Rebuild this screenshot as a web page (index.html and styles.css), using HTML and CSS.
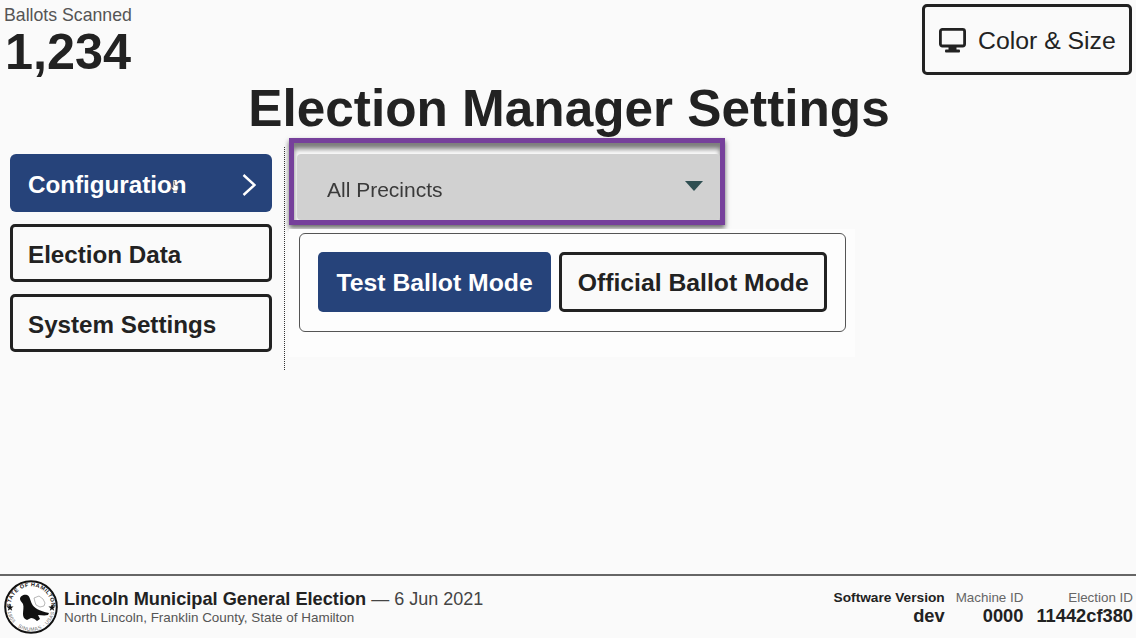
FILE: index.html
```html
<!DOCTYPE html>
<html lang="en">
<head>
<meta charset="utf-8">
<title>Election Manager Settings</title>
<link rel="stylesheet" href="styles.css">
</head>
<body>

<header class="top">
  <div class="tally">
    <div class="tally-label">Ballots Scanned</div>
    <div class="tally-count">1,234</div>
  </div>
  <button class="btn btn-size">
    <svg class="monitor" viewBox="0 0 27 25" width="27" height="25">
      <rect x="1.4" y="1.4" width="24.2" height="16.600" rx="2" fill="none" stroke="#222" stroke-width="2.800"/>
      <rect x="9.500" y="18" width="8" height="4" fill="#222"/>
      <rect x="6" y="21.500" width="15" height="3" rx="1" fill="#222"/>
    </svg>
    Color &amp; Size
  </button>
</header>

<h1 class="title">Election Manager Settings</h1>

<main class="main">
  <nav class="sidebar">
    <a class="btn nav-item nav-active">
      Configuration
      <svg class="chevron" viewBox="0 0 14 24" width="14" height="24">
        <path d="M1.500 2l11 10-11 10" fill="none" stroke="#fff" stroke-width="2.400"/>
      </svg>
      <svg class="cursor" viewBox="0 0 10 12" width="10" height="12">
        <path d="M3 1h1.600v4l3.600.8V9L7 11H3.600L1 7.400l1-.6 1 1z" fill="#fff" stroke="#555" stroke-width=".7"/>
      </svg>
    </a>
    <a class="btn nav-item">Election Data</a>
    <a class="btn nav-item">System Settings</a>
  </nav>

  <section class="content">
    <div class="highlight">
      <div class="select">
        <span class="select-text">All Precincts</span>
        <span class="select-arrow"></span>
      </div>
    </div>
    <div class="mode-wrap">
      <div class="mode-box">
        <button class="btn btn-mode btn-primary">Test Ballot Mode</button>
        <button class="btn btn-mode">Official Ballot Mode</button>
      </div>
    </div>
  </section>
</main>

<footer class="footer">
  <svg class="seal" viewBox="0 0 54 54" width="54" height="54">
    <defs>
      <path id="seal-top" d="M6.500 27a20.500 20.500 0 0 1 41 0"/>
      <path id="seal-bottom" d="M3 27a24 24 0 0 0 48 0"/>
    </defs>
    <circle cx="27" cy="27" r="25.800" fill="#fff" stroke="#111" stroke-width="2"/>
    <text class="seal-text seal-text-bold"><textPath href="#seal-top" startOffset="50%" text-anchor="middle">STATE OF HAMILTON</textPath></text>
    <text class="seal-text seal-text-light"><textPath href="#seal-bottom" startOffset="50%" text-anchor="middle">1803 · SINUMAS · USAS</textPath></text>
    <path d="M30 18l5-2 4 3 2 4-1 3-4 1-4-2-1-3z" fill="none" stroke="#888" stroke-width=".6"/>
    <path d="M16 19c0-3 4-5 7-4 3 1 3 5 5 9 2 4 7 7 17 9l-1 2c-4 1-7 0-10 0l2 4-3 2c-2-2-4-3-6-3l-4 2c-3-1-4-3-4-6 0-4 1-7 0-10-1-2-3-3-3-5z" fill="#111"/>
    <path class="seal-star" d="M6 24l.9 2.600h2.700l-2.200 1.600.8 2.600L6 29.200l-2.200 1.600.8-2.600-2.200-1.600h2.700z"/>
    <path class="seal-star" d="M48 24l.9 2.600h2.700l-2.200 1.600.8 2.600-2.200-1.600-2.200 1.600.8-2.600-2.200-1.600h2.700z"/>
  </svg>
  <div class="election">
    <div class="election-title"><b>Lincoln Municipal General Election</b> <span class="election-date">— 6 Jun 2021</span></div>
    <div class="election-place">North Lincoln, Franklin County, State of Hamilton</div>
  </div>
  <div class="meta">
    <div class="meta-col meta-col-first">
      <div class="meta-label meta-label-bold">Software Version</div>
      <div class="meta-value">dev</div>
    </div>
    <div class="meta-col">
      <div class="meta-label">Machine ID</div>
      <div class="meta-value">0000</div>
    </div>
    <div class="meta-col">
      <div class="meta-label">Election ID</div>
      <div class="meta-value">11442cf380</div>
    </div>
  </div>
</footer>

</body>
</html>
```

FILE: styles.css
```css
* {
    box-sizing: border-box;
}
body {
    margin: 0;
    height: 100vh;
    display: flex;
    flex-direction: column;
    overflow: hidden;
    font-family: "Liberation Sans", Arial, sans-serif;
    color: #222;
    background: #fafafa;
}

.btn {
    display: flex;
    align-items: center;
    font-family: inherit;
    color: #222;
    background: #fafafa;
    border: 3px solid #222;
    border-radius: 5px;
}

/* header */
.top {
    height: 78px;
    display: flex;
    justify-content: space-between;
    padding: 4px 4px 0 4px;
}
.tally-label {
    font-size: 17.700px;
    line-height: 22px;
    color: #555;
}
.tally-count {
    margin: 2px 0 0 1px;
    font-size: 50.400px;
    line-height: 48px;
    font-weight: bold;
}
.btn-size {
    width: 210px;
    height: 71px;
    padding: 2px 0 0 14px;
    gap: 12px;
    font-size: 24.800px;
}
.monitor {
    flex: none;
}
.title {
    margin: 0;
    height: 60px;
    padding-left: 2px;
    font-size: 51.300px;
    line-height: 62px;
    text-align: center;
}

/* main */
.main {
    flex: 1;
    display: flex;
    align-items: flex-start;
    padding-left: 10px;
}
.sidebar {
    width: 275px;
    margin-top: 9px;
    padding: 7px 12px 18px 0;
    display: flex;
    flex-direction: column;
    gap: 12px;
    border-right: 1px dotted #333;
}
.nav-item {
    position: relative;
    height: 58px;
    padding: 3px 0 0 15px;
    font-size: 24.200px;
    font-weight: bold;
}
.nav-active {
    justify-content: space-between;
    padding: 3px 16px 0 18px;
    color: #fff;
    background: #26437a;
    border: 0;
    border-radius: 6px;
}
.cursor {
    position: absolute;
    left: 160px;
    top: 26px;
}

.content {
    padding-left: 4px;
}
.highlight {
    width: 436px;
    height: 87px;
    padding: 11px 0 0 3px;
    border: 5px solid #76409b;
    box-shadow: 0 3px 5px rgba(0, 0, 0, .6), inset 0 6px 5px rgba(0, 0, 0, .5);
}
.select {
    height: 100%;
    display: flex;
    align-items: center;
    justify-content: space-between;
    padding: 5px 17px 0 30px;
    background: #d1d1d1;
    border-radius: 4px;
}
.select-text {
    font-size: 21px;
    color: #3a3a3a;
    filter: blur(.5px);
}
.select-arrow {
    width: 0;
    height: 0;
    margin-bottom: 8px;
    border-left: 9px solid transparent;
    border-right: 9px solid transparent;
    border-top: 10px solid #2f4f52;
}
.mode-wrap {
    width: 566px;
    height: 128px;
    margin-top: 4px;
    padding: 4px 9px 0 10px;
    background: #fdfdfd;
}
.mode-box {
    width: 547px;
    height: 99px;
    display: flex;
    gap: 8px;
    padding: 18px;
    border: 1px solid #555;
    border-radius: 6px;
}
.btn-mode {
    height: 60px;
    padding: 2px 15.500px 0;
    font-size: 24.750px;
    font-weight: bold;
    white-space: nowrap;
}
.btn-primary {
    padding: 2px 18.500px 0;
    color: #fff;
    background: #26437a;
    border: 0;
}

/* footer */
.footer {
    height: 64px;
    display: flex;
    align-items: center;
    padding: 0 3px 0 4px;
    border-top: 2px solid #666;
}
.seal {
    flex: none;
}
.seal-text {
    font-size: 5.600px;
    letter-spacing: .4px;
    fill: #222;
}
.seal-text-bold {
    font-weight: bold;
}
.seal-text-light {
    font-size: 5px;
    fill: #666;
}
.seal-star {
    fill: #111;
}
.election {
    margin-left: 6px;
}
.election-title {
    font-size: 18.200px;
    line-height: 20px;
}
.election-date {
    font-size: 18px;
    color: #444;
}
.election-place {
    font-size: 13.450px;
    line-height: 17px;
    color: #555;
}
.meta {
    margin-left: auto;
    display: flex;
    gap: 13px;
    text-align: right;
}
.meta-col-first {
    margin-right: -2px;
}
.meta-label {
    font-size: 13.400px;
    line-height: 17px;
    color: #666;
}
.meta-label-bold {
    font-size: 13.700px;
    font-weight: bold;
    color: #222;
}
.meta-value {
    font-size: 18.300px;
    line-height: 20px;
    font-weight: bold;
}
```
